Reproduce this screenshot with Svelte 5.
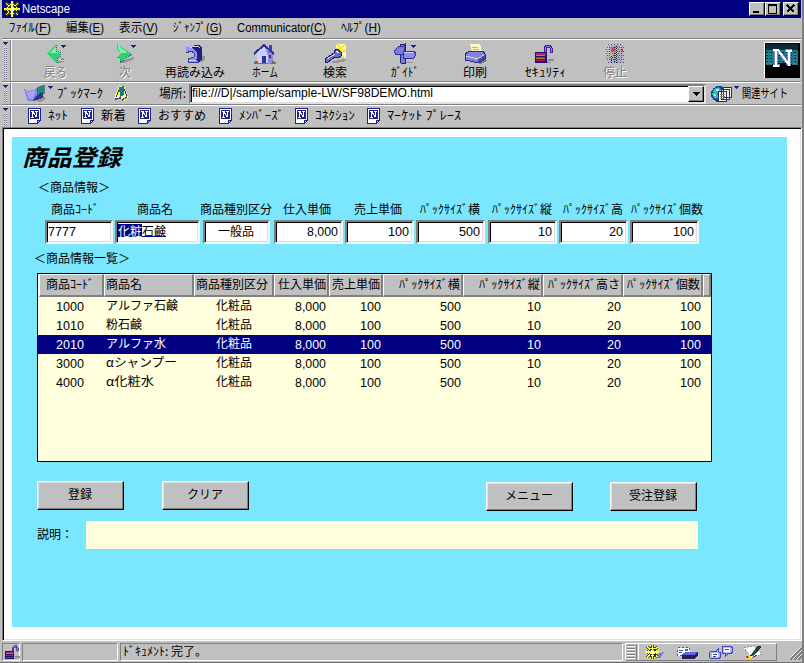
<script>
  const menus = [
    ['ﾌｧｲﾙ', 'F', 42], ['編集', 'E', 38], ['表示', 'V', 39],
    ['ｼﾞｬﾝﾌﾟ', 'G', 49], ['Communicator', 'C', 89], ['ﾍﾙﾌﾟ', 'H', 40]
  ];
  const tools = [
    { id: 'back', label: '戻る', w: 23, off: true, menu: true },
    { id: 'next', label: '次', w: 12, off: true, menu: true },
    { id: 'reload', label: '再読み込み', w: 60 },
    { id: 'home', label: 'ホーム', w: 26 },
    { id: 'search', label: '検索', w: 24 },
    { id: 'guide', label: 'ｶﾞｲﾄﾞ', w: 28, menu: true },
    { id: 'print', label: '印刷', w: 24 },
    { id: 'lock', label: 'ｾｷｭﾘﾃｨ', w: 41 },
    { id: 'stop', label: '停止', w: 24, off: true }
  ];
  const links = [
    ['ﾈｯﾄ', 20, 13], ['新着', 25, 12], ['おすすめ', 48, 13],
    ['ﾒﾝﾊﾞｰｽﾞ', 45, 11], ['ｺﾈｸｼｮﾝ', 40, 12], ['ﾏｰｹｯﾄ ﾌﾟﾚｰｽ', 74, 0]
  ];
  const fields = [
    { label: '商品ｺｰﾄﾞ', tw: 48, w: 68, gap: 2, shift: -8, value: '7777', vw: 28, kind: 'left' },
    { label: '商品名', tw: 36, w: 85, gap: 3, shift: -5, kind: 'name' },
    { label: '商品種別区分', tw: 72, w: 67, gap: 4, shift: -2, value: '一般品', vw: 36, kind: 'mid' },
    { label: '仕入単価', tw: 48, w: 69, gap: 2, shift: -3, value: '8,000', vw: 31 },
    { label: '売上単価', tw: 48, w: 69, gap: 2, shift: -4, value: '100', vw: 21 },
    { label: 'ﾊﾟｯｸｻｲｽﾞ横', tw: 60, w: 69, gap: 3, shift: -1, value: '500', vw: 21 },
    { label: 'ﾊﾟｯｸｻｲｽﾞ縦', tw: 60, w: 69, gap: 2, shift: -1, value: '10', vw: 14 },
    { label: 'ﾊﾟｯｸｻｲｽﾞ高', tw: 60, w: 69, gap: 2, shift: -1, value: '20', vw: 14 },
    { label: 'ﾊﾟｯｸｻｲｽﾞ個数', tw: 72, w: 69, gap: 0, shift: 5, value: '100', vw: 21 }
  ];
  const cols = [
    { label: '商品ｺｰﾄﾞ', tw: 48, w: 65, a: 'c' },
    { label: '商品名', tw: 36, w: 90, a: 'l' },
    { label: '商品種別区分', tw: 72, w: 80, a: 'c' },
    { label: '仕入単価', tw: 48, w: 55, a: 'r' },
    { label: '売上単価', tw: 48, w: 55, a: 'r' },
    { label: 'ﾊﾟｯｸｻｲｽﾞ横', tw: 61, w: 80, a: 'r' },
    { label: 'ﾊﾟｯｸｻｲｽﾞ縦', tw: 61, w: 80, a: 'r' },
    { label: 'ﾊﾟｯｸｻｲｽﾞ高さ', tw: 72, w: 80, a: 'r' },
    { label: 'ﾊﾟｯｸｻｲｽﾞ個数', tw: 73, w: 80, a: 'r' }
  ];
  const rows = [
    ['1000', 'アルファ石鹸', 72], ['1010', '粉石鹸', 36], ['2010', 'アルファ水', 60],
    ['3000', 'αシャンプー', 71], ['4000', 'α化粧水', 48]
  ];
  const nums = [['8,000', 31], ['100', 21], ['500', 21], ['10', 14], ['20', 14], ['100', 21]];
  const selected = 2;

  // Condenses or widens a label to the width of its slot.
  function fit(node, width) {
    const natural = node.getBoundingClientRect().width;
    node.style.transform = `scaleX(${width / natural})`;
  }
</script>

{#snippet t(text, w, key)}
  <span class="slot" style:width="{w}px"><span class="fit" use:fit={w}>{text}{#if key}(<u>{key}</u>){/if}</span></span>
{/snippet}

{#snippet padlock()}
  <path d="M10 8V4L12 1H16L18 4V8H16V4L15 3H13L12 4V8Z" fill="#8484ff" stroke="#42218c" />
  <rect x="1" y="8" width="12" height="11" fill="#21107b" />
  <path d="M2 9H12V11H2ZM2 13H11V14H2ZM2 16H11V17H2Z" fill="#b52152" />
  <path d="M2 11H11V12H2ZM2 14H11V15H2Z" fill="#c68421" />
  <path d="M14 15H20V17H13V19H17V18H14Z" fill="#8c8c8c" />
{/snippet}

{#snippet wheel()}
  <g stroke="#4a4a00" stroke-width="3" fill="none"><circle cx="8" cy="8" r="4.5" /><path d="M8 0V16M0 8H16M2 2L14 14M14 2L2 14" /></g>
  <g stroke="#ffff42" stroke-width="1.3" fill="none"><circle cx="8" cy="8" r="4.5" /><path d="M8 0V16M0 8H16M2 2L14 14M14 2L2 14" /></g>
  <rect x="7" y="7" width="3" height="3" fill="#fff" />
  <path d="M5 5H7V7H5ZM10 5H12V7H10ZM5 10H7V12H5ZM10 10H12V12H10Z" fill="#21216b" />
{/snippet}

{#snippet page()}
  <svg class="page" viewBox="0 0 13 16" width="13" height="16">
    <path d="M.5 .5H12.5V12L9 15.5H.5Z" fill="#fff" stroke="#21218c" />
    <path d="M12 12H9V15" fill="#c6c6ff" stroke="#21218c" />
    <rect x="2" y="2" width="9" height="9" fill="#21218c" />
    <path d="M3 3.5H5L8 9M4 4V9.5M3 9.5H5.5M8.5 3V9M7 3.5H10" stroke="#fff" fill="none" />
  </svg>
{/snippet}

{#snippet caret()}
  <svg class="caret" width="5" height="3"><path d="M0 0H5L2.5 3Z" fill="#21217b" /></svg>
{/snippet}

{#snippet grip()}<div class="grip">{@render caret()}<i></i></div>{/snippet}

<div class="window">
  <header class="title">
    <svg width="17" height="17" viewBox="0 0 17 17">{@render wheel()}</svg>
    {@render t('Netscape', 48)}
    <div class="winbtns">
      <button aria-label="minimize"><svg width="12" height="10"><path d="M2 8H8" stroke="#000" stroke-width="2" /></svg></button>
      <button aria-label="maximize"><svg width="12" height="10"><path d="M1.5 1V9.5H9.5V1.5" fill="none" stroke="#000" /><path d="M1 1H10" stroke="#000" stroke-width="2" /></svg></button>
      <button class="close" aria-label="close"><svg width="12" height="10"><path d="M2 1L9 8M9 1L2 8" stroke="#000" stroke-width="1.6" /></svg></button>
    </div>
  </header>

  <nav class="menu">
    {#each menus as [label, key, w]}{@render t(label, w, key)}{/each}
  </nav>

  <div class="bar tools">
    {@render grip()}
    <div class="toolbtns">
      {#each tools as tool}
        <div class="tool" class:off={tool.off}>
          <svg width="22" height="20" viewBox="0 0 22 20">
            {#if tool.id === 'back'}
              <path d="M14 17H21L16 19H11ZM14 15L20 14V16Z" fill="#949494" />
              <path d="M3 10L12 0V7L16 8V13L13 14V20Z" fill="#31ce7b" />
              <path d="M5 9L12 2V7H15V9Z" fill="#8cffad" opacity=".8" />
              <path d="M12 1V7L16 8V13L13 14V19" stroke="#217373" fill="none" stroke-dasharray="1 1" />
            {:else if tool.id === 'next'}
              <path d="M10 16L20 13V15L11 19H6Z" fill="#949494" />
              <path d="M3 0L18 10L6 19V14L3 13L8 9L3 6Z" fill="#31ce7b" />
              <path d="M4 1L14 9H8L4 6Z" fill="#8cffad" opacity=".8" />
              <path d="M18 10L6 19V14L3 13" stroke="#217373" fill="none" stroke-dasharray="1 1" />
            {:else if tool.id === 'reload'}
              <path d="M8 18H19L21 15V12L17 11Z" fill="#949494" />
              <path d="M2 1L8 3L10 1H15L18 4V16L15 18H4V15L10 13V9L7 8L2 9Z" fill="#9494f7" />
              <path d="M8 3L10 1H15L18 4V16L15 18L12 16L13 14V8L9 5Z" fill="#21217b" />
              <path d="M2 1L8 4M4 16H12M9 2H14L16 4" stroke="#ceceff" fill="none" />
              <path d="M2 9L7 7L10 9V13L4 15V18H15" stroke="#39398c" fill="none" />
            {:else if tool.id === 'home'}
              <path d="M0 18H22V20H0Z" fill="#219494" />
              <path d="M3 9L11 2L19 9V19H3Z" fill="#ceceff" />
              <path d="M11 3L19 10V19L14 20V13Z" fill="#8c8cde" />
              <path d="M15 1H18V8H15Z" fill="#4242ad" />
              <path d="M0 10L10 1L20 10" stroke="#31319c" stroke-width="2" fill="none" />
              <path d="M8 12H12V19H8ZM15 11H17V14H15Z" fill="#31319c" />
              <path d="M1 17H4V19H1ZM18 17H20V19H18Z" fill="#d64221" />
            {:else if tool.id === 'search'}
              <path d="M12 1L15 0H20L22 2V14L18 13L13 6Z" fill="#ffff9c" />
              <path d="M16 5L21 1M17 7H22M16 9L20 13M15 5V1" stroke="#f7e700" stroke-width="1.4" />
              <path d="M6 18L20 15L22 17L12 19Z" fill="#949494" />
              <path d="M1 15L10 9V7L13 5L17 8V12L14 14L11 13L4 18H1Z" fill="#6b6bc6" stroke="#21216b" />
              <path d="M3 15L11 10" stroke="#ceceff" />
              <path d="M12 7L15 9" stroke="#fff" />
            {:else if tool.id === 'guide'}
              <path d="M14 18H21L17 19H8Z" fill="#949494" />
              <path d="M6 1L11 0V19H7L6 16Z" fill="#7b7bd6" stroke="#21217b" />
              <path d="M0 7L4 3L10 2V10L2 11Z" fill="#7b7bde" stroke="#31319c" />
              <path d="M9 7H20L22 10L20 14H9Z" fill="#8c8cf7" stroke="#31319c" />
              <path d="M10 8H19" stroke="#ceceff" />
            {:else if tool.id === 'print'}
              <path d="M13 19L21 15L23 17L17 20Z" fill="#848484" />
              <path d="M6 0H16L18 8H8Z" fill="#fff7c6" />
              <path d="M8 3H14M9 5H15" stroke="#c6b573" />
              <path d="M1 10L6 7H19L21 10V15L15 19L1 16Z" fill="#8484de" stroke="#29297b" />
              <path d="M2 12L14 15L20 11" stroke="#d6d6ff" fill="none" />
              <path d="M14 15V19L21 15V11Z" fill="#4a4a9c" />
              <path d="M11 15H13" stroke="#0f8" />
            {:else if tool.id === 'lock'}
              {@render padlock()}
            {:else}
              <rect x="5" y="1" width="14" height="18" fill="#adadbd" />
              <path d="M3 3.500H20M3 7.500H20M3 11.500H20M3 15.500H20" stroke="#5252bd" stroke-dasharray="1 1" />
              <path d="M4 .500H18M2 5.500H20M2 9.500H20M2 13.500H20M4 18.500H20" stroke="#4a4a9c" stroke-dasharray="1 2" />
              <path d="M12.500 2V19M10.500 3V18M7.500 10V19" stroke="#212131" stroke-dasharray="1 1" />
              <path d="M7 4H11V8H7Z" fill="#ce5a63" /><path d="M8 5H10V7H8ZM17 5H19V8H17Z" fill="#ff2121" />
              <path d="M6 10H8V12H6Z" fill="#ffb542" />
            {/if}
          </svg>
          {#if tool.menu}{@render caret()}{/if}
          {@render t(tool.label, tool.w)}
        </div>
      {/each}
    </div>
    <svg class="logo" width="36" height="36" viewBox="0 0 36 36">
      <rect width="36" height="36" fill="#000" />
      <rect x="2" y="2" width="32" height="10" fill="#102939" />
      <rect x="2" y="8" width="32" height="15" fill="#187b84" />
      <path d="M2 7H34M2 10H34M2 13H34M2 16H34M2 19H34" stroke="#083142" stroke-dasharray="2 2" />
      <path d="M2 12H34M2 18H34M2 21H34" stroke="#5aadb5" stroke-dasharray="1 3" />
      <path d="M2 25Q18 17 34 25V34H2Z" fill="#000" />
      <path d="M9 8.5H14L25 23M12 8V23M8.500 23.500H15.500M25 24V8M21 8.500H28" fill="none" stroke="#7b84d6" stroke-width="3.500" />
      <path d="M9 8H14L25 22.500M12 8V23M9 23.500H15M25 24V8M22 8.500H28" fill="none" stroke="#fff" stroke-width="2" />
      <path d="M.5 36V.5H36" fill="none" stroke="#fff" /><path d="M35.500 1V35.500H1" fill="none" stroke="#000" />
    </svg>
  </div>

  <div class="bar location">
    {@render grip()}
    <svg class="bookmark" width="23" height="18" viewBox="0 0 23 18">
      <path d="M12 16L20 11L23 14L18 17Z" fill="#949494" />
      <path d="M1 4L6 6L12 4L17 2L20 11L10 16H5Z" fill="#8484e7" />
      <path d="M2 4L6 7L13 5L10 14H6Z" fill="#a5a5ff" />
      <path d="M10 16L13 11L20 7V13Z" fill="#31318c" />
      <path d="M14 3L21 0V9L18 7L15 10Z" fill="#218c7b" stroke="#086363" stroke-width=".6" />
    </svg>
    {@render caret()}
    {@render t('ﾌﾞｯｸﾏｰｸ', 46)}
    <svg class="pen" width="16" height="17" viewBox="0 0 16 17">
      <path d="M1 13L6 1H11L15 12L11 16L8 13L3 15Z" fill="#ffff7b" />
      <path d="M6 2L11 1V10L7 12Z" fill="#108473" /><path d="M11 4L14 11M6 5L3 12" stroke="#29297b" />
      <path d="M2 14L8 13M9 15L14 12" stroke="#4a4a9c" stroke-width="1.500" />
    </svg>
    {@render t('場所:', 27)}
    <div class="url">
      {@render t('file:///D|/sample/sample-LW/SF98DEMO.html', 241)}
      <button aria-label="history"><svg width="7" height="4"><path d="M0 0H7L3.5 4Z" /></svg></button>
    </div>
    <svg class="globe" width="21" height="18" viewBox="0 0 21 18">
      <circle cx="8" cy="9" r="8" fill="#1842a5" /><path d="M3 4L8 2L10 5L6 9L8 12L4 14L1 9Z" fill="#29bdb5" /><path d="M5 4H8V6H5ZM3 9H5V11H3Z" fill="#adffd6" />
      <path d="M12.500 2.500H20.500V12H12.500ZM10.500 4.500H18.500V14H10.500ZM7.500 6.500H15.500V16H7.500Z" fill="#ffffef" stroke="#29296b" />
      <path d="M9 9.500H14M9 11.500H14M9 13.500H13" stroke="#848473" />
    </svg>
    {@render caret()}
    {@render t('関連サイト', 46)}
  </div>

  <div class="bar links">
    {@render grip()}
    <div class="linklist">
      {#each links as [label, w, gap]}
        {@render page()}<span class="link" style:margin-right="{gap}px">{@render t(label, w)}</span>
      {/each}
    </div>
  </div>

  <main class="viewport">
    <div class="form">
      <h1>{@render t('商品登録', 99)}</h1>
      <h2>{@render t('＜商品情報＞', 72)}</h2>
      <div class="fields">
        {#each fields as f}
          <div class="field" style:width="{f.w}px" style:margin-right="{f.gap}px">
            <div class="lab" style:margin-left="{f.shift}px">{@render t(f.label, f.tw)}</div>
            <div class="input {f.kind ?? 'right'}">
              {#if f.kind === 'name'}
                <span class="picked">{@render t('化粧', 24)}</span><span class="composing">{@render t('石鹸', 24)}</span>
              {:else}
                {@render t(f.value, f.vw)}
              {/if}
            </div>
          </div>
        {/each}
      </div>
      <h3>{@render t('＜商品情報一覧＞', 96)}</h3>

      <div class="table">
        <div class="head">
          {#each cols as c}
            <div class="th {c.a}" style:width="{c.w}px">{@render t(c.label, c.tw)}</div>
          {/each}
          <div class="th last"></div>
        </div>
        {#each rows as [code, name, w], i}
          <div class="row" class:sel={i === selected}>
            <div class="td c num" style:width="{cols[0].w}px">{@render t(code, 28)}</div>
            <div class="td l" style:width="{cols[1].w}px">{@render t(name, w)}</div>
            <div class="td c" style:width="{cols[2].w}px">{@render t('化粧品', 36)}</div>
            {#each nums as [n, nw], j}
              <div class="td r num" style:width="{cols[j + 3].w}px">{@render t(n, nw)}</div>
            {/each}
          </div>
        {/each}
      </div>

      <div class="actions">
        <button>{@render t('登録', 24)}</button>
        <button>{@render t('クリア', 36)}</button>
        <button class="low">{@render t('メニュー', 48)}</button>
        <button class="low">{@render t('受注登録', 48)}</button>
      </div>
      <div class="note">{@render t('説明：', 36)}<div class="notebox"></div></div>
    </div>
  </main>

  <footer class="status">
    <div class="cell lockcell"><svg width="16" height="15" viewBox="0 0 20 20">{@render padlock()}</svg></div>
    <div class="cell progress"></div>
    <div class="cell message">{@render t('ﾄﾞｷｭﾒﾝﾄ: 完了。', 84)}</div>
    <div class="components">
      <div class="ridges"></div>
      <div class="compicons">
        <svg width="22" height="15" viewBox="0 0 22 17"><path d="M12 11L21 8L17 15L11 14Z" fill="#7b7bce" />{@render wheel()}</svg>
        <svg width="23" height="15" viewBox="0 0 23 15">
          <rect x="1.500" y="2.500" width="12" height="8" fill="#fff" stroke="#e72121" stroke-dasharray="2 2" /><path d="M3 5.500H7M3 7.500H6" stroke="#4242c6" /><path d="M9 4H12V6H9Z" fill="#218c21" />
          <path d="M6 9L10 7H22V11L18 14H6Z" fill="#21215a" /><path d="M6 9L10 7H22L18 10H6Z" fill="#6363de" />
        </svg>
        <svg width="24" height="15" viewBox="0 0 24 15">
          <path d="M1.500 6.500H7L9.500 3.500V6.500L11.500 8V12L10 13.500H1.500L.500 12V8Z" fill="#b5b5ff" stroke="#4242bd" /><path d="M13.500 1.500H22L23.500 3V7L22 8.500H19L16.500 11.500V8.500H13.500Z" fill="#b5b5ff" stroke="#4242bd" />
          <path d="M3 8H9V12H3ZM15 3H21V7H15Z" fill="#fff" /><path d="M4 9.500H8M4 11.500H7M16 4.500H20" stroke="#215a42" />
        </svg>
        <svg width="20" height="15" viewBox="0 0 20 15">
          <path d="M1 3L10 1L19 9L8 13Z" fill="#fff" stroke="#7b7b42" stroke-width=".7" stroke-dasharray="2 1" /><path d="M9 9L15 1L18 2L11 10L7 11Z" fill="#105252" stroke="#000" stroke-width=".6" />
          <path d="M4 9L8 11V14H4Z" fill="#ffde42" /><path d="M3 11L6 13M10 12L14 10" stroke="#a52121" />
        </svg>
      </div>
    </div>
    <svg class="resize" width="14" height="14"><path d="M2 14L14 2M6 14L14 6M10 14L14 10" stroke="#808080" stroke-width="1.600" /><path d="M1 13L13 1M5 13L14 4M9 13L14 8" stroke="#fff" stroke-width=".8" /></svg>
  </footer>
</div>

<style>
  .window {
    box-sizing: border-box; width: 804px; height: 663px; padding: 0 1px 0 2px;
    background: #c0c0c0; border-right: 2px solid #808080; border-bottom: 1px solid #707070;
    display: flex; flex-direction: column; overflow: hidden; color: #000;
    font: 12px/16px "Noto Sans CJK JP", sans-serif;
  }
  .window * { box-sizing: border-box; }
  svg { display: block; flex: none; overflow: visible; shape-rendering: crispEdges; }
  button { padding: 0; font: inherit; color: inherit; border-radius: 0; }
  .slot { display: block; flex: none; }
  .fit { display: inline-block; white-space: pre; transform-origin: 0 50%; vertical-align: top; }
  u { text-underline-offset: 2px; }

  .title { height: 18px; background: #000080; color: #fff; display: flex; align-items: center; padding: 0 2px; gap: 1px; }
  .title, .menu, .url { font-family: "Liberation Sans", "Noto Sans CJK JP", sans-serif; }
  .winbtns { display: flex; margin-left: auto; }
  .winbtns button { width: 16px; height: 14px; background: #c0c0c0; border: 1px solid; border-color: #fff #000 #000 #fff; box-shadow: inset -1px -1px #808080; padding-left: 1px; }
  .winbtns .close { margin-left: 2px; }
  .menu { height: 20px; display: flex; align-items: center; gap: 15px; padding: 0 0 1px 7px; }

  .bar { display: flex; border-top: 1px solid #808080; box-shadow: inset 0 1px #fff; padding-top: 1px; }
  .grip { width: 10px; flex: none; border-right: 1px solid #fff; box-shadow: inset -1px 0 #808080; padding: 2px 2px 2px 1px; display: flex; flex-direction: column; gap: 2px; }
  .grip i { flex: 1; width: 5px; background: conic-gradient(#e8e8e8 25%, #73738c 0 50%, #c0c0c0 0) 0 0 / 2px 2px; }
  .tools { height: 43px; }
  .toolbtns { display: flex; padding: 4px 0 0 8px; }
  .tool { width: 70px; position: relative; display: flex; flex-direction: column; align-items: center; line-height: 15px; }
  .tool .caret { position: absolute; left: 41px; top: 1px; }
  .off { color: #808080; text-shadow: 1px 1px #fff; }
  .logo { margin: 2px 1px 0 auto; }

  .location { height: 23px; align-items: center; }
  .location .grip, .links .grip { align-self: stretch; }
  .location > .slot { margin-top: -2px; }
  .bookmark { margin: 0 2px 0 11px; }
  .location > .caret { align-self: flex-start; margin-top: 3px; }
  .location > .caret + .slot { margin-left: 4px; }
  .pen { margin: 0 30px 0 10px; }
  .url { width: 517px; height: 20px; margin-left: 3px; padding: 0 0 0 1px; background: #fff; border: 2px solid; border-color: #808080 #e0e0e0 #e0e0e0 #808080; box-shadow: inset 1px 1px #000; display: flex; align-items: center; }
  .url .slot { margin-top: -1px; }
  .url button { margin-left: auto; width: 16px; height: 16px; background: #c0c0c0; border: 1px solid; border-color: #fff #000 #000 #fff; box-shadow: inset -1px -1px #808080; display: flex; align-items: center; justify-content: center; }
  .globe { margin: 0 2px 0 5px; }
  .globe + .caret + .slot { margin-left: 3px !important; }
  .links { height: 23px; }
  .linklist { display: flex; align-items: center; padding: 0 0 1px 16px; }
  .link { margin: -2px 0 0 7px; }

  .viewport { flex: none; height: 514px; margin-right: -1px; background: #fff; border: 1px solid; border-color: #808080 #fff #fff #808080; box-shadow: inset 1px 1px #000, inset -1px -1px #dfdfdf; padding: 9px 0 0 9px; }
  .form { width: 775px; height: 490px; background: #7be7ff; padding: 7px 0 0 25px; display: flex; flex-direction: column; align-items: flex-start; }
  h1, h2, h3 { margin: 0; font-weight: 400; font-size: 12px; }
  h1 { font: italic 700 23px/27px "Noto Sans CJK JP", sans-serif; margin: -1px 0 0 -15px; }
  h2 { line-height: 16px; margin-left: 1px; margin-top: 9px; }
  h3 { line-height: 16px; margin: 6px 0 7px -3px; }
  .fields { display: flex; margin: 6px 0 0 8px; }
  .field { display: flex; flex-direction: column; }
  .lab { display: flex; justify-content: center; line-height: 16px; margin-bottom: 3px; }
  .field .lab { margin-right: -5px; padding-right: 5px; }
  .input { height: 24px; background: #fff; border: 2px solid; border-color: #808080 #f4f4f4 #f4f4f4 #808080; box-shadow: inset 1px 1px #000, inset -1px -1px #dfdfdf; display: flex; align-items: center; }
  .right { justify-content: flex-end; padding-right: 3px; }
  .left { padding-left: 1px; }
  .mid { justify-content: center; padding: 0 2px 3px 0; }
  .right, .left, .num { font-family: "Liberation Sans", sans-serif; font-size: 13px; }
  .name { padding: 0 0 3px 1px; line-height: 13px; }
  .picked { background: #000080; color: #fff; }
  .composing { border-bottom: 1px solid #000080; height: 13px; }

  .table { width: 675px; height: 189px; border: 1px solid #000; background: #ffffde; }
  .head { display: flex; height: 23px; background: #fff; padding-left: 1px; }
  .th { height: 23px; background: #c0c0c0; border: 1px solid; border-color: #fff #808080 #808080 #fff; border-right-width: 2px; border-bottom-width: 2px; display: flex; align-items: center; padding-bottom: 2px; }
  .th.c { justify-content: center; padding-right: 2px; }
  .th.l { padding-left: 1px; }
  .th.r { justify-content: flex-end; padding-right: 1px; }
  .th.last { width: 8px; }
  .row { display: flex; height: 19px; padding-left: 1px; }
  .td { display: flex; line-height: 15px; }
  .td.c { justify-content: center; padding-right: 1px; }
  .td.l { padding-left: 2px; }
  .td.r { justify-content: flex-end; padding-right: 3px; }
  .td.num { line-height: 20px; }
  .td.num.c { padding-right: 4px; }
  .sel { background: #000080; color: #fff; }

  .actions { display: flex; margin-top: 19px; }
  .actions button { width: 87px; height: 29px; background: #c0c0c0; border: 1px solid; border-color: #fff #000 #000 #fff; box-shadow: inset -1px -1px #808080, inset 1px 1px #dfdfdf; display: flex; justify-content: center; align-items: center; padding: 0 2px 3px 0; }
  .actions button + button { margin-left: 38px; }
  .actions button.low { margin-top: 1px; margin-left: 237px; }
  .actions button.low + .low { margin-left: 37px; }
  .note { display: flex; margin-top: 10px; gap: 13px; line-height: 25px; }
  .notebox { width: 612px; height: 28px; background: #ffffde; }

  .status { height: 21px; display: flex; padding: 2px 0 1px; gap: 2px; margin-right: -1px; }
  .cell { height: 18px; border: 1px solid; border-color: #808080 #fff #fff #808080; }
  .lockcell { width: 18px; padding: 1px; }
  .progress { width: 96px; }
  .message { width: 503px; padding-left: 2px; line-height: 14px; }
  .components { width: 152px; height: 18px; border: 1px solid; border-color: #fff #808080 #808080 #fff; display: flex; }
  .ridges { width: 11px; border-right: 1px solid #808080; margin-right: 1px; background: repeating-linear-gradient(#808080 0 1px, #fff 1px 2px, #c0c0c0 2px 3px) 1px 1px / 8px 14px no-repeat; }
  .compicons { display: flex; flex: 1; gap: 10px; padding: 1px 0 0 5px; border-left: 1px solid #fff; }
  .resize { margin: 3px 0 0 auto; }
</style>
